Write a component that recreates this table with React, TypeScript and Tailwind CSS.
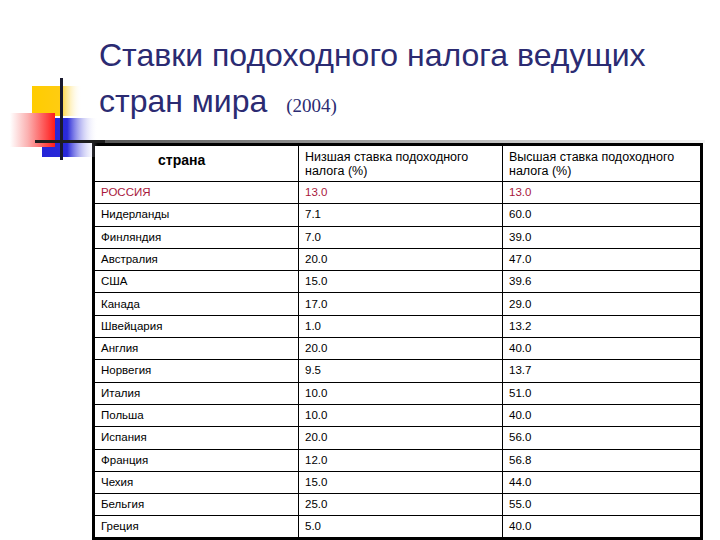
import React from "react";

const rows: [string, string, string, boolean?][] = [
  ["РОССИЯ", "13.0", "13.0", true],
  ["Нидерланды", "7.1", "60.0"],
  ["Финляндия", "7.0", "39.0"],
  ["Австралия", "20.0", "47.0"],
  ["США", "15.0", "39.6"],
  ["Канада", "17.0", "29.0"],
  ["Швейцария", "1.0", "13.2"],
  ["Англия", "20.0", "40.0"],
  ["Норвегия", "9.5", "13.7"],
  ["Италия", "10.0", "51.0"],
  ["Польша", "10.0", "40.0"],
  ["Испания", "20.0", "56.0"],
  ["Франция", "12.0", "56.8"],
  ["Чехия", "15.0", "44.0"],
  ["Бельгия", "25.0", "55.0"],
  ["Греция", "5.0", "40.0"],
];

function Logo() {
  return (
    <svg className="absolute left-0 top-0" width="110" height="170" viewBox="0 0 110 170">
      <defs>
        <linearGradient id="yel" x1="0" x2="1" y1="0" y2="0">
          <stop offset="0" stopColor="#ffcc00" />
          <stop offset="0.55" stopColor="#ffcc11" />
          <stop offset="1" stopColor="#ffffff" stopOpacity="0" />
        </linearGradient>
        <linearGradient id="blu" x1="0" x2="1" y1="0" y2="0">
          <stop offset="0" stopColor="#2424d8" />
          <stop offset="0.45" stopColor="#2a2ad8" />
          <stop offset="1" stopColor="#ffffff" stopOpacity="0" />
        </linearGradient>
        <linearGradient id="red" x1="0" x2="1" y1="0" y2="0">
          <stop offset="0" stopColor="#ffffff" />
          <stop offset="0.4" stopColor="#fbb0b0" />
          <stop offset="1" stopColor="#ff1a1a" />
        </linearGradient>
      </defs>
      <rect x="32" y="86" width="50" height="30" fill="url(#yel)" />
      <rect x="42" y="118" width="56" height="39" fill="url(#blu)" />
      <rect x="10" y="113" width="45" height="34" fill="url(#red)" />
      <rect x="60" y="78" width="3" height="82" fill="#1a1a2e" />
      <rect x="35" y="140" width="70" height="3" fill="#1e1e1e" />
    </svg>
  );
}

export default function App() {
  const cell = "border border-black align-middle text-left pl-[6px] pr-1";
  return (
    <div
      className="relative w-[720px] h-[540px] bg-white overflow-hidden"
      style={{ fontFamily: "'Liberation Sans', Arial, sans-serif" }}
    >
      <Logo />
      <div className="pt-[32px] pl-[99px] text-[#2b2b72] text-[32px] leading-[46px]">
        <div className="h-[46px]">Ставки подоходного налога ведущих</div>
        <div className="h-[46px]">
          стран мира
          <span
            className="ml-[19px] text-[19px] leading-none"
            style={{ fontFamily: "'Liberation Serif', 'Times New Roman', serif" }}
          >
            (2004)
          </span>
        </div>
      </div>
      <div className="ml-[95px] mt-[16px] w-[610px] h-[3px] bg-gradient-to-r from-[#555555] via-[#aaaaaa] to-[#f4f4f4]" />
      <table className="ml-[92px] border-collapse border-[3px] border-black text-[11.5px] text-black">
        <colgroup>
          <col className="w-[205px]" />
          <col className="w-[204px]" />
          <col className="w-[199px]" />
        </colgroup>
        <thead>
          <tr className="h-[37px]">
            <th className="border border-black align-top text-left pl-[63px] pt-[4px] text-[14px] font-bold">
              страна
            </th>
            <th className={cell + " font-normal text-[12.5px] leading-[14px]"}>
              Низшая ставка подоходного
              <br />
              налога (%)
            </th>
            <th className={cell + " font-normal text-[12.5px] leading-[14px]"}>
              Высшая ставка подоходного
              <br />
              налога (%)
            </th>
          </tr>
        </thead>
        <tbody>
          {rows.map(([c, a, b, red]) => (
            <tr key={c} className="h-[22.3px]">
              <td className={cell + (red ? " text-[#a8183c]" : "")}>{c}</td>
              <td className={cell + (red ? " text-[#a8183c]" : "")}>{a}</td>
              <td className={cell + (red ? " text-[#a8183c]" : "")}>{b}</td>
            </tr>
          ))}
        </tbody>
      </table>
    </div>
  );
}
